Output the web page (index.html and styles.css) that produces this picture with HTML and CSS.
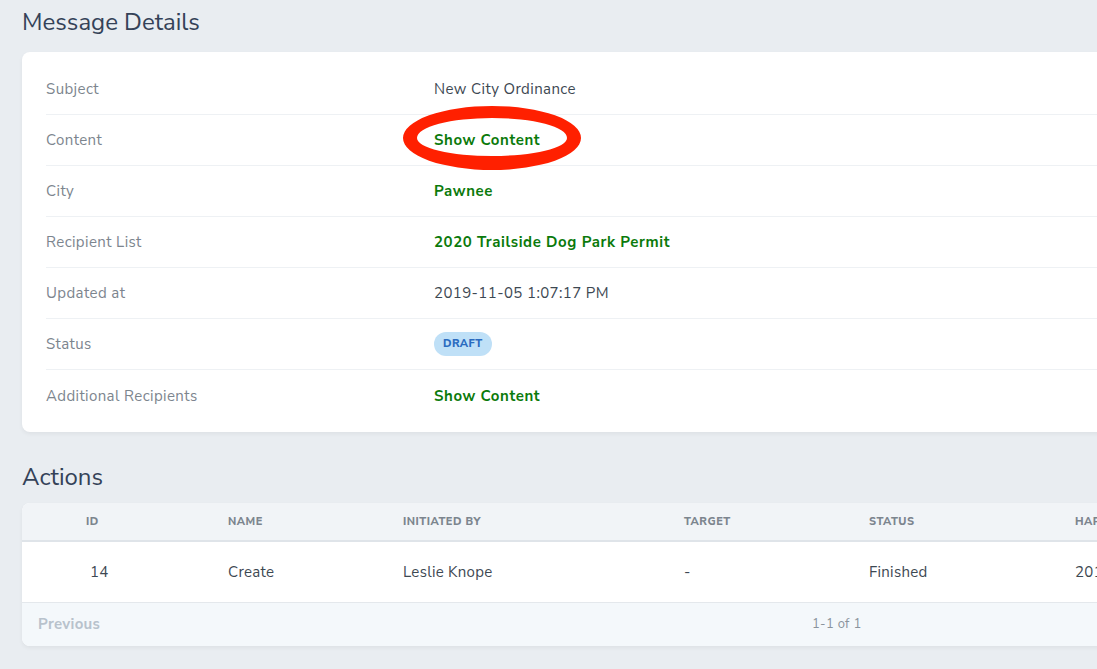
FILE: index.html
```html
<!DOCTYPE html>
<html lang="en">
<head>
<meta charset="utf-8">
<title>Message Details</title>
<link rel="stylesheet" href="styles.css">
</head>
<body>
<main class="page">
  <h1 class="heading">Message Details</h1>
  <section class="card details">
    <div class="row">
      <div class="label">Subject</div>
      <div class="value">New City Ordinance</div>
    </div>
    <div class="row">
      <div class="label">Content</div>
      <div class="value"><span class="circled"><a class="link" href="#">Show Content</a><span class="ring"></span></span></div>
    </div>
    <div class="row">
      <div class="label">City</div>
      <div class="value"><a class="link" href="#">Pawnee</a></div>
    </div>
    <div class="row">
      <div class="label">Recipient List</div>
      <div class="value"><a class="link" href="#">2020 Trailside Dog Park Permit</a></div>
    </div>
    <div class="row">
      <div class="label">Updated at</div>
      <div class="value">2019-11-05 1:07:17 PM</div>
    </div>
    <div class="row">
      <div class="label">Status</div>
      <div class="value"><span class="badge">DRAFT</span></div>
    </div>
    <div class="row">
      <div class="label">Additional Recipients</div>
      <div class="value"><a class="link" href="#">Show Content</a></div>
    </div>
  </section>

  <h2 class="heading heading-actions">Actions</h2>
  <section class="card table-card">
    <table class="table">
      <thead>
        <tr>
          <th class="c-id">ID</th>
          <th class="c-name">Name</th>
          <th class="c-by">Initiated By</th>
          <th class="c-target">Target</th>
          <th class="c-status">Status</th>
          <th class="c-hap">Happened At</th>
        </tr>
      </thead>
      <tbody>
        <tr>
          <td class="c-id">14</td>
          <td class="c-name">Create</td>
          <td class="c-by">Leslie Knope</td>
          <td class="c-target">-</td>
          <td class="c-status">Finished</td>
          <td class="c-hap">2019-11-05 1:07:17 PM</td>
        </tr>
      </tbody>
    </table>
    <div class="pager">
      <span class="prev">Previous</span>
      <span class="count">1-1 of 1</span>
      <span class="next"></span>
    </div>
  </section>
</main>
</body>
</html>
```

FILE: styles.css
```css
* { box-sizing: border-box; }

html, body {
  margin: 0;
  padding: 0;
  background: #e9edf1;
  overflow: hidden;
}

body {
  font-family: "Nunito Sans", "Lato", "Noto Sans", sans-serif;
  color: #3d4852;
  width: 1097px;
  height: 669px;
}

.page {
  padding: 6px 0 0 22px;
  width: 1300px;
}

.heading {
  margin: 0;
  font-size: 24px;
  font-weight: 400;
  color: #344258;
  line-height: 32px;
  height: 34px;
}

.heading-actions {
  margin-top: 27px;
  height: 44px;
  line-height: 36px;
}

.card {
  background: #fff;
  border-radius: 8px;
  box-shadow: 0 2px 4px rgba(0, 0, 0, 0.05);
}

.details {
  margin-top: 12px;
  padding: 12px 0 11px 24px;
}

.row {
  display: flex;
  align-items: center;
  height: 51px;
  border-bottom: 1px solid #eef1f4;
  font-size: 15px;
  letter-spacing: 0.4px;
}

.row:last-child { border-bottom: none; }

.label {
  width: 388px;
  color: #7c858e;
}

.value {
  color: #3d4852;
}

.link {
  color: #0b7a0b;
  font-weight: 700;
  letter-spacing: 0.6px;
  text-decoration: none;
}

.circled {
  position: relative;
  display: inline-block;
}

.ring {
  position: absolute;
  left: -31px;
  top: -24px;
  width: 178px;
  height: 64px;
  border: 14px solid #ff2000;
  border-top-width: 12px;
  border-radius: 50%;
  pointer-events: none;
}

.badge {
  display: inline-block;
  background: #bfe0f7;
  color: #2a6bbf;
  font-size: 11px;
  font-weight: 800;
  letter-spacing: 0.4px;
  line-height: 24px;
  height: 24px;
  padding: 0 9px;
  border-radius: 12px;
}

.table-card {
  overflow: hidden;
  width: 1200px;
}

.table {
  border-collapse: collapse;
  width: 1200px;
  table-layout: fixed;
}

.table th {
  background: #f1f4f7;
  height: 38px;
  border-bottom: 2px solid #dfe4e9;
  font-size: 11px;
  font-weight: 800;
  text-transform: uppercase;
  letter-spacing: 0.5px;
  color: #7c858e;
  text-align: left;
  padding: 0;
  white-space: nowrap;
}

.table td {
  height: 61px;
  font-size: 15px;
  letter-spacing: 0.3px;
  color: #3d4852;
  padding: 0;
  border-bottom: 1px solid #e4e8ec;
  white-space: nowrap;
}

.c-id { width: 206px; padding-left: 64px !important; }
.c-name { width: 175px; }
.c-by { width: 281px; }
.c-target { width: 185px; }
.c-status { width: 206px; }
.c-hap { width: auto; }

td.c-id { padding-left: 68px !important; }

.pager {
  display: flex;
  align-items: center;
  height: 43px;
  background: #f4f8fb;
  padding: 0 16px;
}

.prev {
  width: 300px;
  font-size: 15px;
  font-weight: 700;
  letter-spacing: 0.3px;
  color: #b8c2cc;
}

.count {
  margin-left: 474px;
  font-size: 13px;
  letter-spacing: 0.3px;
  color: #8a939c;
}
```
